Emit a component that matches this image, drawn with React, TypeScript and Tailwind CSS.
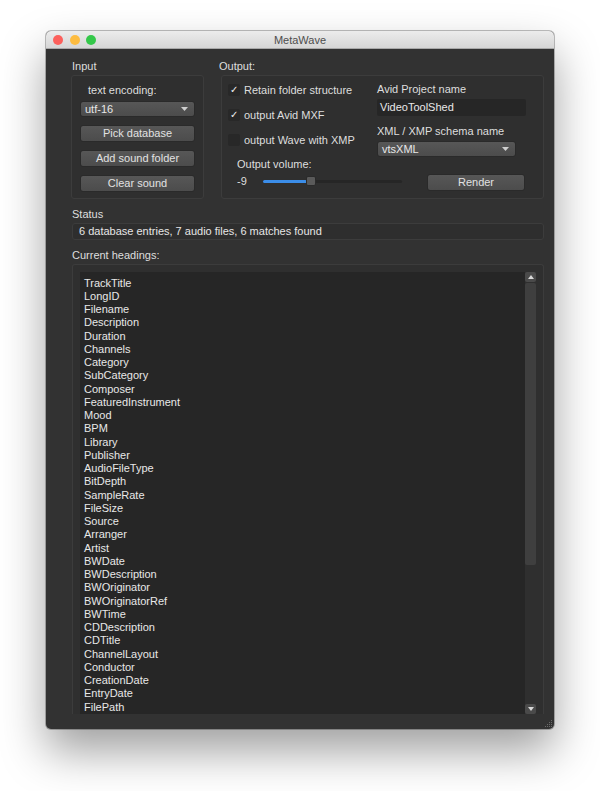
import { ChevronDown } from 'lucide-react';

const headings = [
  'TrackTitle', 'LongID', 'Filename', 'Description', 'Duration', 'Channels', 'Category',
  'SubCategory', 'Composer', 'FeaturedInstrument', 'Mood', 'BPM', 'Library', 'Publisher',
  'AudioFileType', 'BitDepth', 'SampleRate', 'FileSize', 'Source', 'Arranger', 'Artist',
  'BWDate', 'BWDescription', 'BWOriginator', 'BWOriginatorRef', 'BWTime', 'CDDescription',
  'CDTitle', 'ChannelLayout', 'Conductor', 'CreationDate', 'EntryDate', 'FilePath',
];

function Button({ label, className = '' }: { label: string; className?: string }) {
  return (
    <div
      className={`flex h-[17px] items-center justify-center rounded-[3px] border border-[#2a2a2a] bg-gradient-to-b from-[#575757] to-[#4c4c4c] text-[#e2e2e2] ${className}`}
    >
      {label}
    </div>
  );
}

function Combo({ value, className = '' }: { value: string; className?: string }) {
  return (
    <div
      className={`flex items-center justify-between rounded-[3px] border border-[#2a2a2a] bg-gradient-to-b from-[#575757] to-[#4c4c4c] pl-[4px] pr-[6px] text-[#e8e8e8] ${className}`}
    >
      <span>{value}</span>
      <svg width="7" height="4" viewBox="0 0 7 4">
        <path d="M0 0h7L3.5 4z" fill="#cfcfcf" />
      </svg>
    </div>
  );
}

function Check({ checked, label }: { checked: boolean; label: string }) {
  return (
    <div className="flex h-[25px] items-center">
      <div className="flex h-[12px] w-[12px] items-center justify-center rounded-[2px] bg-[#282828] text-[10px] leading-none text-[#f0f0f0]">
        {checked ? '✓' : ''}
      </div>
      <span className="ml-[4px]">{label}</span>
    </div>
  );
}

export default function App() {
  return (
    <div
      className="min-h-[791px] bg-white pl-[46px] pt-[31px] text-[11px] leading-[14px]"
      style={{ fontFamily: '"Liberation Sans", Arial, sans-serif' }}
    >
      <div className="relative flex h-[698px] w-[508px] flex-col overflow-hidden rounded-[5px] bg-[#323232] text-[#dedede] shadow-[0_22px_45px_rgba(0,0,0,0.38),0_0_0_1px_rgba(0,0,0,0.25)]">
        {/* title bar */}
        <div className="relative flex h-[18px] shrink-0 items-center justify-center border-b border-[#a9a9a9] bg-gradient-to-b from-[#ececec] to-[#d6d6d6]">
          <div className="absolute left-[7px] top-[4px] flex gap-[6.5px]">
            <div className="h-[10px] w-[10px] rounded-full bg-[#fc605c]" />
            <div className="h-[10px] w-[10px] rounded-full bg-[#fdbc40]" />
            <div className="h-[10px] w-[10px] rounded-full bg-[#34c84a]" />
          </div>
          <span className="text-[11px] text-[#4d4d4d]">MetaWave</span>
        </div>

        <div className="flex flex-1 flex-col pl-[25px] pr-[10px] pt-[10px]">
          {/* top row */}
          <div className="flex">
            {/* Input */}
            <div className="flex w-[133px] flex-col">
              <div className="ml-[1px]">Input</div>
              <div className="mt-[1.5px] flex h-[124px] flex-col rounded-[3px] border border-[#3c3c3c] bg-[#2f2f2f] pl-[8px] pr-[8px] pt-[7px]">
                <div className="ml-[8px]">text encoding:</div>
                <Combo value="utf-16" className="mt-[4px] h-[16px]" />
                <Button label="Pick database" className="mt-[8px]" />
                <Button label="Add sound folder" className="mt-[8px]" />
                <Button label="Clear sound" className="mt-[8px]" />
              </div>
            </div>

            {/* Output */}
            <div className="ml-[17px] flex flex-1 flex-col">
              <div className="-ml-[2px]">Output:</div>
              <div className="mt-[1.5px] flex h-[124px] rounded-[3px] border border-[#3c3c3c] bg-[#2f2f2f] pl-[6px]">
                <div className="flex w-[149px] shrink-0 flex-col pt-[1.5px]">
                  <Check checked label="Retain folder structure" />
                  <Check checked label="output Avid MXF" />
                  <Check checked={false} label="output Wave with XMP" />
                  <div className="ml-[9px] mt-[5px]">Output volume:</div>
                  <div className="ml-[9px] mt-[3px] flex h-[14px] items-center">
                    <span className="w-[26px] shrink-0">-9</span>
                    <div className="relative h-[3px] w-[139px] shrink-0 rounded-full bg-[#262626]">
                      <div className="absolute left-0 top-0 h-[3px] w-[44px] rounded-full bg-[#3b8de8]" />
                      <div className="absolute left-[43px] top-[-4px] h-[10px] w-[10px] rounded-[2px] border border-[#2a2a2a] bg-[#5a5a5a]" />
                    </div>
                  </div>
                </div>
                <div className="flex w-[149px] shrink-0 flex-col pt-[6px]">
                  <div>Avid Project name</div>
                  <div className="mt-[3px] flex h-[17px] items-center rounded-[2px] bg-[#262626] pl-[3px] text-[#e8e8e8]">
                    VideoToolShed
                  </div>
                  <div className="mt-[8px]">XML / XMP schema name</div>
                  <Combo value="vtsXML" className="mt-[3.5px] h-[15.5px] w-[139px]" />
                  <Button label="Render" className="ml-[50px] mt-[17px] w-[98px]" />
                </div>
              </div>
            </div>
          </div>

          {/* Status */}
          <div className="ml-[1px] mt-[8px]">Status</div>
          <div className="ml-[1px] mt-[2px] flex h-[17.5px] items-center rounded-[3px] border border-[#3c3c3c] bg-[#2e2e2e] pl-[6px] text-[#e6e6e6]">
            6 database entries, 7 audio files, 6 matches found
          </div>

          {/* headings */}
          <div className="ml-[1px] mt-[8px]">Current headings:</div>
          <div className="ml-[1px] mt-[2px] flex min-h-0 flex-1 rounded-t-[3px] border-x border-t border-[#3c3c3c] bg-[#2f2f2f] px-[7px] pt-[7px]">
            <div className="flex min-h-0 flex-1 overflow-hidden bg-[#262626]">
              <div className="flex-1 pl-[4px] pt-[4.5px] leading-[13.25px] text-[#e8e8e8]">
                {headings.map((h) => (
                  <div key={h}>{h}</div>
                ))}
              </div>
              {/* scrollbar */}
              <div className="flex w-[11px] flex-col bg-[#2f2f2f]">
                <div className="flex h-[10px] items-center justify-center rounded-[2px] bg-[#4a4a4a]">
                  <svg width="6" height="4" viewBox="0 0 6 4">
                    <path d="M3 0l3 4H0z" fill="#d8d8d8" />
                  </svg>
                </div>
                <div className="mt-[1px] h-[282px] rounded-[2px] bg-[#3f3f3f]" />
                <div className="flex-1" />
                <div className="flex h-[10px] items-center justify-center rounded-[2px] bg-[#4a4a4a]">
                  <svg width="6" height="4" viewBox="0 0 6 4">
                    <path d="M0 0h6L3 4z" fill="#d8d8d8" />
                  </svg>
                </div>
              </div>
            </div>
          </div>
          <div className="h-[17px] shrink-0" />
        </div>

        {/* resize grip */}
        <svg className="absolute bottom-[1px] right-[1px]" width="10" height="10" viewBox="0 0 10 10">
          {[
            [8, 2], [6, 4], [8, 4], [4, 6], [6, 6], [8, 6], [2, 8], [4, 8], [6, 8], [8, 8],
          ].map(([x, y]) => (
            <rect key={`${x}-${y}`} x={x} y={y} width="1" height="1" fill="#6a6a6a" />
          ))}
        </svg>
        <ChevronDown className="hidden" />
      </div>
    </div>
  );
}
